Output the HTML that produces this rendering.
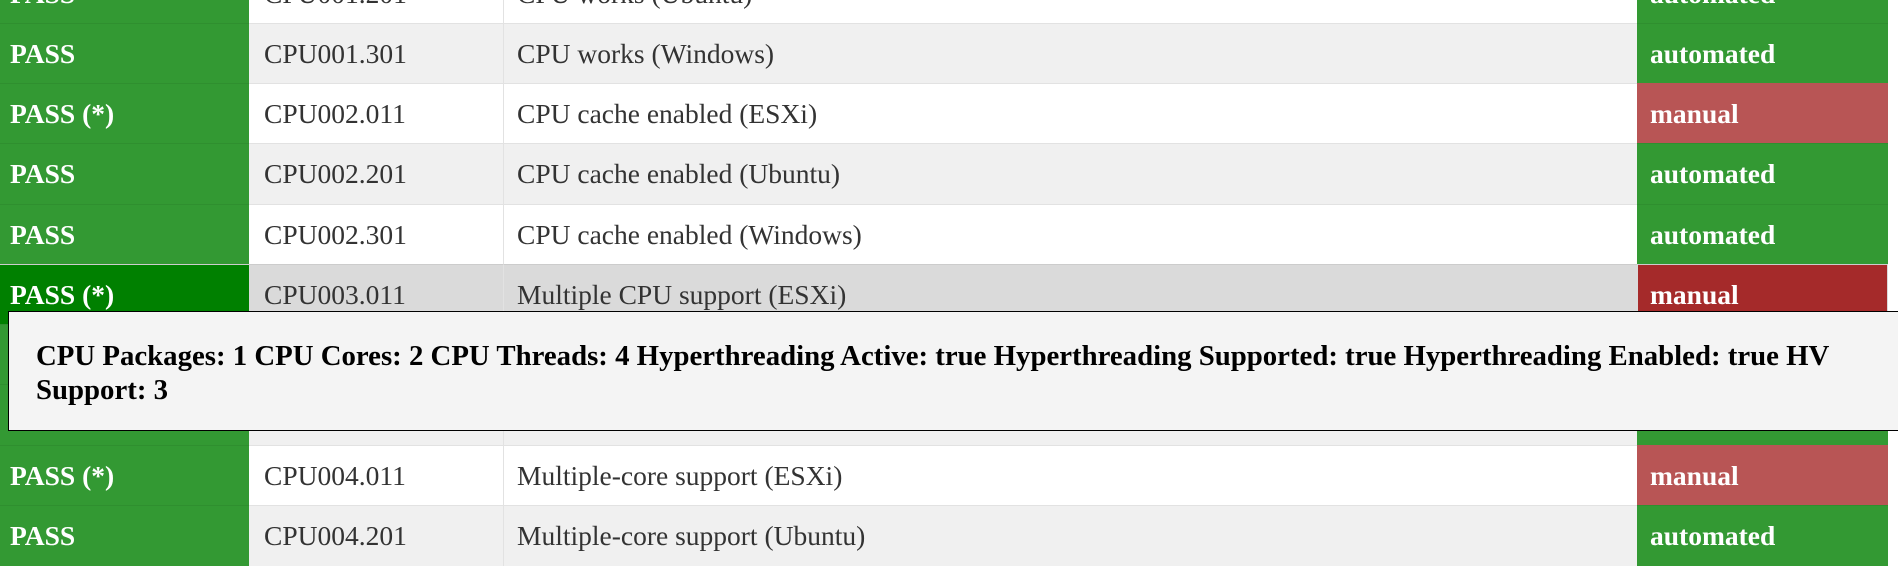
<!DOCTYPE html>
<html><head><meta charset="utf-8"><style>
html,body{margin:0;padding:0;width:1898px;height:535px;overflow:hidden;background:#fff;font-family:"Liberation Serif",serif}
.row{position:absolute;left:0;width:1888px;height:61px}
.c{position:absolute;top:0;bottom:0;display:flex;align-items:center;font-size:27.5px;white-space:nowrap;box-sizing:border-box;border-top:1px solid #e2e2e2}
.c1{left:0;width:249px;background:#339933;color:#fff;font-weight:bold;padding-left:10px;border-top-color:#2f8f2f}
.c2{left:249px;width:255px;color:#333;padding-left:15px;border-right:1px solid #e2e2e2}
.c3{left:504px;width:1133px;color:#333;padding-left:13px}
.c4{left:1637px;width:251px;color:#fff;font-weight:bold;padding-left:13px;background:#339933;border-top-color:#2f8f2f}
.m{background:#b85555;border-top-color:#b85555}
.g{background:#f0f0f0}
.tip{position:absolute;left:8px;top:311px;width:1900px;height:120px;background:#f4f4f4;border:1px solid #000;box-sizing:border-box}
.tip div{position:absolute;left:27px;font-weight:bold;font-size:28.8px;line-height:34px;color:#000;white-space:nowrap}
</style></head><body>
<div class="row" style="top:-37px"><div class="c c1">PASS</div><div class="c c2">CPU001.201</div><div class="c c3">CPU works (Ubuntu)</div><div class="c c4">automated</div></div>
<div class="row g" style="top:23px"><div class="c c1">PASS</div><div class="c c2">CPU001.301</div><div class="c c3">CPU works (Windows)</div><div class="c c4">automated</div></div>
<div class="row" style="top:83px"><div class="c c1">PASS (*)</div><div class="c c2">CPU002.011</div><div class="c c3">CPU cache enabled (ESXi)</div><div class="c c4 m">manual</div></div>
<div class="row g" style="top:143px"><div class="c c1">PASS</div><div class="c c2">CPU002.201</div><div class="c c3">CPU cache enabled (Ubuntu)</div><div class="c c4">automated</div></div>
<div class="row" style="top:204px"><div class="c c1">PASS</div><div class="c c2">CPU002.301</div><div class="c c3">CPU cache enabled (Windows)</div><div class="c c4">automated</div></div>
<div class="row" style="top:264px;background:#dadada"><div class="c c1" style="background:#008000;border-top-color:#ccc">PASS (*)</div><div class="c c2" style="border-top-color:#ccc">CPU003.011</div><div class="c c3" style="border-top-color:#ccc">Multiple CPU support (ESXi)</div><div class="c c4" style="background:#a52a2a;left:1638px;width:249px;padding-left:12px;border-top-color:#ccc">manual</div></div>
<div class="row" style="top:324px"><div class="c c1">PASS</div><div class="c c2">CPU003.201</div><div class="c c3">Multiple CPU support (Ubuntu)</div><div class="c c4">automated</div></div>
<div class="row g" style="top:384px"><div class="c c1">PASS</div><div class="c c2">CPU003.301</div><div class="c c3">Multiple CPU support (Windows)</div><div class="c c4">automated</div></div>
<div class="row" style="top:445px"><div class="c c1">PASS (*)</div><div class="c c2">CPU004.011</div><div class="c c3">Multiple-core support (ESXi)</div><div class="c c4 m">manual</div></div>
<div class="row g" style="top:505px"><div class="c c1">PASS</div><div class="c c2">CPU004.201</div><div class="c c3">Multiple-core support (Ubuntu)</div><div class="c c4">automated</div></div>
<div class="tip">
<div style="top:27px">CPU Packages: 1 CPU Cores: 2 CPU Threads: 4 Hyperthreading Active: true Hyperthreading Supported: true Hyperthreading Enabled: true HV</div>
<div style="top:61px">Support: 3</div>
</div>
</body></html>
